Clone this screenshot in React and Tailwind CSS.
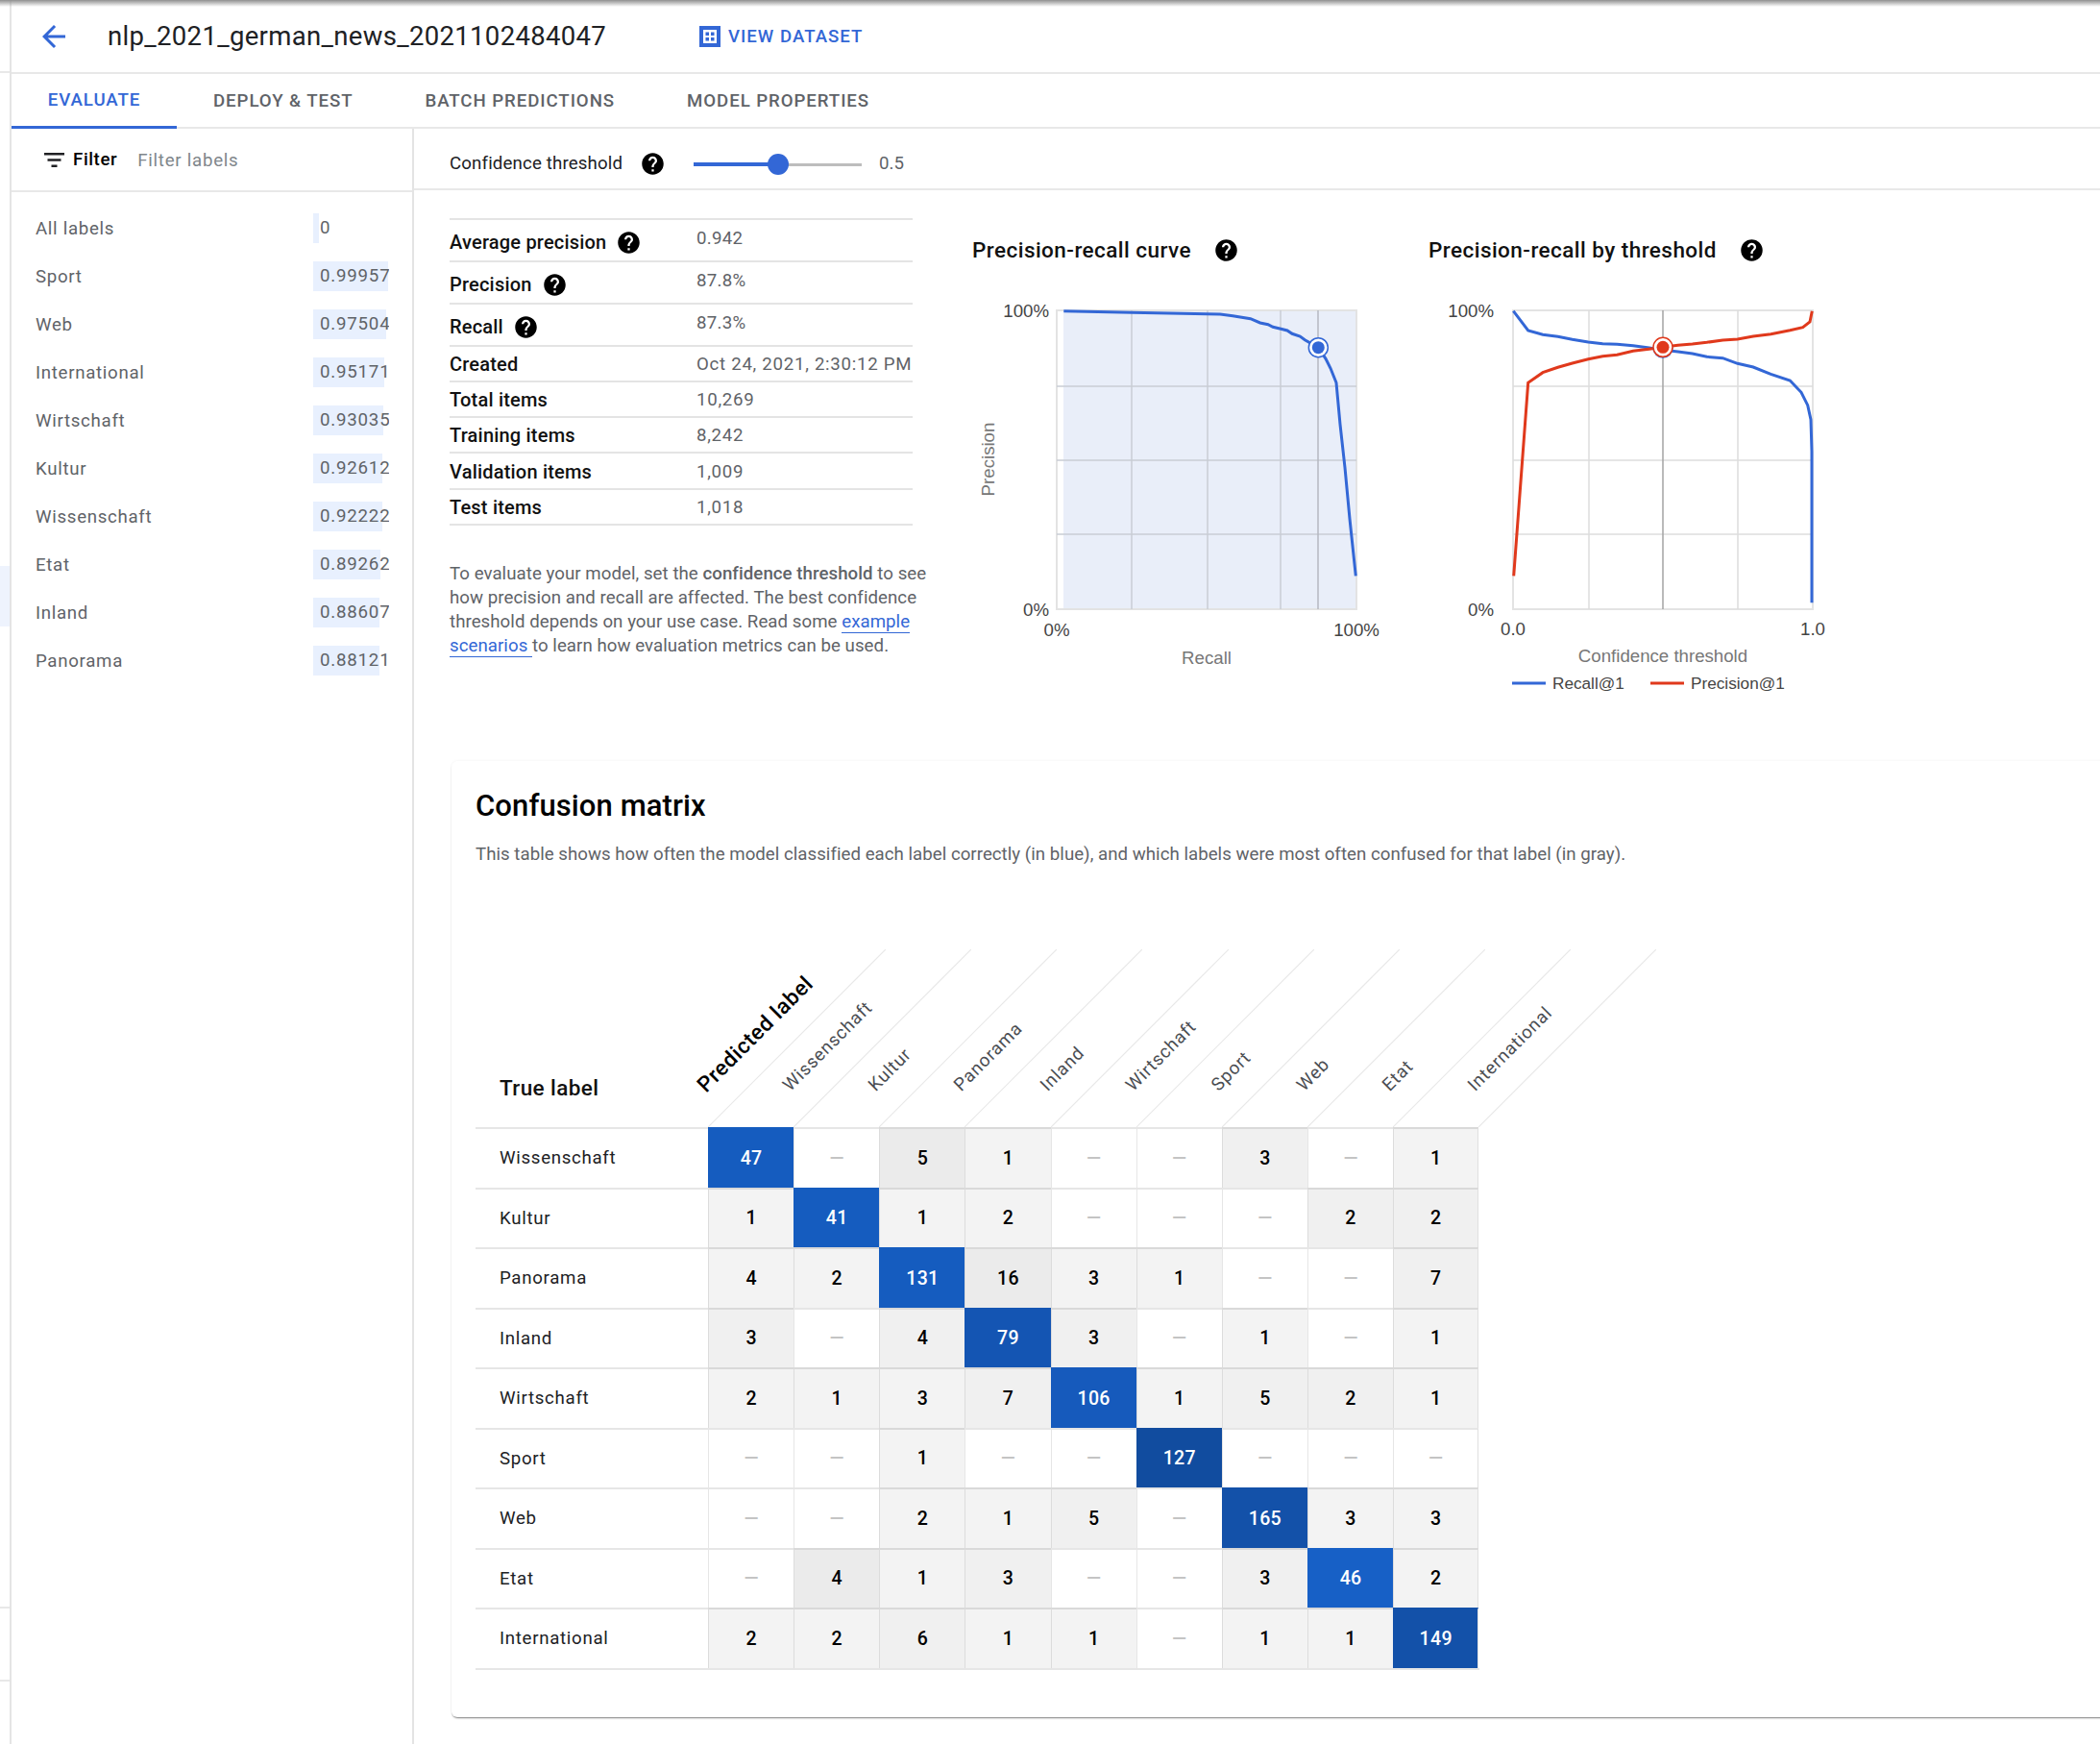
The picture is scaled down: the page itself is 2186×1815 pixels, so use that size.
import React from "react";

const HELP = "M12 2C6.48 2 2 6.48 2 12s4.48 10 10 10 10-4.48 10-10S17.52 2 12 2zm1 17h-2v-2h2v2zm2.07-7.75l-.9.92C13.45 12.9 13 13.5 13 15h-2v-.5c0-1.1.45-2.1 1.17-2.83l1.24-1.26c.37-.36.59-.86.59-1.41 0-1.1-.9-2-2-2s-2 .9-2 2H8c0-2.21 1.79-4 4-4s4 1.79 4 4c0 .88-.36 1.68-.93 2.25z";

function Help({ className = "" }) {
  return (
    <svg viewBox="0 0 24 24" className={"w-[27px] h-[27px] shrink-0 " + className}>
      <path d={HELP} fill="#000" />
    </svg>
  );
}

const labels = [
  ["All labels", "0", "w-[6px]"],
  ["Sport", "0.99957", "w-[78px]"],
  ["Web", "0.97504", "w-[76px]"],
  ["International", "0.95171", "w-[74px]"],
  ["Wirtschaft", "0.93035", "w-[73px]"],
  ["Kultur", "0.92612", "w-[72px]"],
  ["Wissenschaft", "0.92222", "w-[72px]"],
  ["Etat", "0.89262", "w-[70px]"],
  ["Inland", "0.88607", "w-[69px]"],
  ["Panorama", "0.88121", "w-[69px]"],
];

const metrics = [
  { k: "Average precision", v: "0.942", h: "h-[44px]", help: true },
  { k: "Precision", v: "87.8%", h: "h-[44px]", help: true },
  { k: "Recall", v: "87.3%", h: "h-[44px]", help: true },
  { k: "Created", v: "Oct 24, 2021, 2:30:12 PM", h: "h-[37px]" },
  { k: "Total items", v: "10,269", h: "h-[37px]" },
  { k: "Training items", v: "8,242", h: "h-[37px]" },
  { k: "Validation items", v: "1,009", h: "h-[38px]" },
  { k: "Test items", v: "1,018", h: "h-[37px]" },
];

const headers = ["Predicted label", "Wissenschaft", "Kultur", "Panorama", "Inland", "Wirtschaft", "Sport", "Web", "Etat", "International"];

const matrix = [
  ["Wissenschaft", "47:p", "-", "5:c", "1:a", "-", "-", "3:b", "-", "1:a"],
  ["Kultur", "1:a", "41:p", "1:a", "2:a", "-", "-", "-", "2:b", "2:b"],
  ["Panorama", "4:a", "2:a", "131:p", "16:c", "3:a", "1:a", "-", "-", "7:b"],
  ["Inland", "3:b", "-", "4:b", "79:q", "3:b", "-", "1:a", "-", "1:a"],
  ["Wirtschaft", "2:a", "1:a", "3:a", "7:b", "106:r", "1:a", "5:b", "2:b", "1:a"],
  ["Sport", "-", "-", "1:a", "-", "-", "127:s", "-", "-", "-"],
  ["Web", "-", "-", "2:a", "1:a", "5:b", "-", "165:t", "3:a", "3:a"],
  ["Etat", "-", "4:c", "1:a", "3:b", "-", "-", "3:b", "46:u", "2:a"],
  ["International", "2:a", "2:a", "6:b", "1:a", "1:a", "-", "1:a", "1:a", "149:t"],
];

const tier = {
  a: "bg-[#f3f3f3] border-t-[#d9d9d9] border-l-[#dcdcdc] text-black",
  b: "bg-[#f0f0f0] border-t-[#d9d9d9] border-l-[#dcdcdc] text-black",
  c: "bg-[#ebebeb] border-t-[#d9d9d9] border-l-[#dcdcdc] text-black",
  p: "bg-[#155cbf] border-t-[#155cbf] border-l-[#155cbf] text-white",
  q: "bg-[#1455b3] border-t-[#1455b3] border-l-[#1455b3] text-white",
  r: "bg-[#165abc] border-t-[#165abc] border-l-[#165abc] text-white",
  s: "bg-[#114c9f] border-t-[#114c9f] border-l-[#114c9f] text-white",
  t: "bg-[#1351a9] border-t-[#1351a9] border-l-[#1351a9] text-white",
  u: "bg-[#1760c6] border-t-[#1760c6] border-l-[#1760c6] text-white",
  z: "bg-white border-t-[#e6e6e6] border-l-[#e6e6e6] text-[#c4c4c4]",
};

function Cell({ value, last }) {
  const [v, t] = value === "-" ? ["—", "z"] : value.split(":");
  return (
    <div
      className={
        "w-[89.15px] shrink-0 border-t-2 border-l flex items-center justify-center font-medium text-[19.5px] tracking-[0.3px] " +
        tier[t] +
        (last ? " border-r border-r-[#e0e0e0]" : "")
      }
    >
      {v}
    </div>
  );
}

const prCurve = [[352,311],[565,316],[800,320],[840,321],[880,326],[935,335],[965,348],[990,353],[1005,361],[1030,367],[1050,372],[1065,382],[1090,390],[1105,401],[1147,425],[1170,460],[1185,490],[1203,535],[1215,665],[1230,800],[1245,960],[1264,1138]];
const recallCurve = [[376,311],[422,372],[468,385],[515,391],[560,400],[610,408],[655,413],[700,415],[750,419],[800,426],[843,433],[890,438],[935,444],[980,454],[1030,458],[1076,475],[1125,486],[1180,508],[1240,528],[1275,565],[1295,605],[1305,650],[1308,750],[1308,1222]];
const precCurve = [[377,1138],[422,535],[468,503],[515,487],[560,474],[610,461],[655,452],[700,448],[750,436],[800,430],[843,424],[890,418],[935,414],[980,409],[1030,402],[1076,399],[1125,390],[1180,383],[1240,371],[1280,362],[1302,345],[1309,311]];
const pts = (c, ox) => c.map(([x, y]) => `${(ox + x / 3).toFixed(1)},${(220 + y / 3).toFixed(1)}`).join(" ");

const AXIS = { fontFamily: "'Liberation Sans', Arial, sans-serif", fontSize: 18.67, fill: "#444" };
const AXT = { fontFamily: "'Liberation Sans', Arial, sans-serif", fontSize: 18.67, fill: "#777" };
const LEG = { fontFamily: "'Liberation Sans', Arial, sans-serif", fontSize: 17.2, fill: "#444" };

function Grid({ x0, x1, xs, dark }) {
  return (
    <g>
      <rect x={x0} y={323} width={x1 - x0} height={311} fill="none" stroke="#e3e3e3" strokeWidth="2" />
      {[402, 479, 556].map((y) => (
        <line key={y} x1={x0} x2={x1} y1={y} y2={y} stroke="#dcdcdc" strokeWidth="1.5" />
      ))}
      {xs.map((x) => (
        <line key={x} x1={x} x2={x} y1={323} y2={634} stroke="#dcdcdc" strokeWidth="1.5" />
      ))}
      <line x1={dark} x2={dark} y1={323} y2={634} stroke="#a3a3a3" strokeWidth="1.5" />
    </g>
  );
}

function PRChart() {
  return (
    <svg width="470" height="450" viewBox="1013 276 470 450" className="block">
      <rect x="1107" y="324" width="305" height="310" fill="#e9eef9" />
      <rect x="1100" y="323" width="312" height="311" fill="none" stroke="#e3e3e3" strokeWidth="2" />
      {[402, 479, 556].map((y) => (
        <line key={y} x1="1100" x2="1412" y1={y} y2={y} stroke="#c9ccd4" strokeWidth="1.5" />
      ))}
      {[1178, 1257, 1333].map((x) => (
        <line key={x} x1={x} x2={x} y1="323" y2="634" stroke="#c9ccd4" strokeWidth="1.5" />
      ))}
      <line x1="1372" x2="1372" y1="323" y2="634" stroke="#b4b7c0" strokeWidth="1.5" />
      <polyline points={pts(prCurve, 990)} fill="none" stroke="#3367d6" strokeWidth="3" />
      <circle cx="1372.3" cy="361.7" r="10" fill="#fff" stroke="#3367d6" strokeWidth="1.5" />
      <circle cx="1372.3" cy="361.7" r="6.5" fill="#3367d6" />
      <text x="1092" y="330" textAnchor="end" style={AXIS}>100%</text>
      <text x="1092" y="641" textAnchor="end" style={AXIS}>0%</text>
      <text x="1100" y="662" textAnchor="middle" style={AXIS}>0%</text>
      <text x="1412" y="662" textAnchor="middle" style={AXIS}>100%</text>
      <text x="1256" y="691" textAnchor="middle" style={AXT}>Recall</text>
      <text x="1035" y="478" textAnchor="middle" transform="rotate(-90 1035 478)" style={AXT}>Precision</text>
    </svg>
  );
}

function ThresholdChart() {
  return (
    <svg width="470" height="450" viewBox="1488 276 470 450" className="block">
      <Grid x0={1575} x1={1887} xs={[1654, 1809]} dark={1731} />
      <polyline points={pts(recallCurve, 1450)} fill="none" stroke="#3367d6" strokeWidth="3" />
      <polyline points={pts(precCurve, 1450)} fill="none" stroke="#e0391c" strokeWidth="3" />
      <circle cx="1731" cy="362.3" r="10.5" fill="#3367d6" />
      <circle cx="1731" cy="361.3" r="10" fill="#fff" stroke="#e0391c" strokeWidth="1.5" />
      <circle cx="1731" cy="361.3" r="6.5" fill="#e0391c" />
      <text x="1555" y="330" textAnchor="end" style={AXIS}>100%</text>
      <text x="1555" y="641" textAnchor="end" style={AXIS}>0%</text>
      <text x="1575" y="661" textAnchor="middle" style={AXIS}>0.0</text>
      <text x="1887" y="661" textAnchor="middle" style={AXIS}>1.0</text>
      <text x="1731" y="689" textAnchor="middle" style={AXT}>Confidence threshold</text>
      <line x1="1574" x2="1609" y1="711" y2="711" stroke="#3367d6" strokeWidth="3" />
      <text x="1616" y="717" style={LEG}>Recall@1</text>
      <line x1="1718" x2="1753" y1="711" y2="711" stroke="#e0391c" strokeWidth="3" />
      <text x="1760" y="717" style={LEG}>Precision@1</text>
    </svg>
  );
}

export default function App() {
  return (
    <div className="relative flex w-[2186px] h-[1815px] overflow-hidden bg-white font-['Roboto',sans-serif] text-[18.67px] text-[#5f6368]">
      <div className="absolute inset-x-0 top-0 h-[7px] bg-gradient-to-b from-[#909090] to-transparent" />

      {/* far-left rail */}
      <div className="w-[12px] shrink-0 border-r-2 border-[#e4e4e4] flex flex-col">
        <div className="h-[76px] shrink-0 border-b-2 border-[#e8e8e8]" />
        <div className="h-[513px] shrink-0" />
        <div className="h-[63px] shrink-0 bg-[#eef3fd]" />
        <div className="h-[1022px] shrink-0 border-b-2 border-[#e8e8e8]" />
        <div className="h-[76px] shrink-0 border-b-2 border-[#e8e8e8]" />
      </div>

      <div className="flex-1 min-w-0 flex flex-col">
        {/* title bar */}
        <div className="h-[77px] shrink-0 border-b-2 border-[#e8e8e8] flex items-center">
          <svg viewBox="0 0 24 24" className="w-[36px] h-[36px] ml-[26px]">
            <path d="M20 11H7.83l5.59-5.59L12 4l-8 8 8 8 1.41-1.41L7.83 13H20v-2z" fill="#3367d6" />
          </svg>
          <div className="ml-[38px] w-[616px] text-[27.5px] tracking-[0.33px] text-[#202124] leading-none">nlp_2021_german_news_2021102484047</div>
          <svg viewBox="0 0 22 22" className="w-[22px] h-[22px]">
            <path fillRule="evenodd" d="M0 0h22v22H0zM4 4v14h14V4z" fill="#3367d6" />
            <path d="M6.5 6.5h3.5v3.5H6.5zM12 6.5h3.5v3.5H12zM6.5 12h3.5v3.5H6.5zM12 12h3.5v3.5H12z" fill="#3367d6" />
          </svg>
          <div className="ml-[8px] mt-[1px] text-[18.67px] font-medium tracking-[1px] text-[#3367d6] leading-none">VIEW DATASET</div>
        </div>

        {/* tabs */}
        <div className="h-[57px] shrink-0 border-b-2 border-[#e8e8e8] flex font-medium text-[18.67px] tracking-[0.93px]">
          <div className="w-[172px] h-[57px] border-b-[3px] border-[#3367d6] text-[#3367d6] flex items-center justify-center">EVALUATE</div>
          <div className="ml-[38px] flex items-center">DEPLOY &amp; TEST</div>
          <div className="ml-[75px] flex items-center">BATCH PREDICTIONS</div>
          <div className="ml-[75px] flex items-center">MODEL PROPERTIES</div>
        </div>

        <div className="flex-1 min-h-0 flex">
          {/* sidebar */}
          <div className="w-[419px] shrink-0 border-r-2 border-[#e4e4e4]">
            <div className="h-[66px] border-b-2 border-[#e8e8e8] flex items-center">
              <svg viewBox="0 0 21 15" className="w-[21px] h-[15px] ml-[34px]">
                <path d="M0 0h21v2.6H0zM3.5 6.2h14v2.6h-14zM7.5 12.4h6V15h-6z" fill="#202124" />
              </svg>
              <span className="ml-[9px] font-medium text-black tracking-[0.6px]">Filter</span>
              <span className="ml-[21px] mt-[1px] text-[#80868b] tracking-[0.75px]">Filter labels</span>
            </div>
            <div className="pt-[22px] pl-[25px]">
              {labels.map(([name, val, w]) => (
                <div key={name} className="relative flex items-center h-[31px] mb-[19px]">
                  <div className="w-[289px] shrink-0 tracking-[0.7px]">{name}</div>
                  <div className="relative w-[79px] h-[31px] overflow-hidden">
                    <div className={"absolute inset-y-0 left-0 bg-[#e8f0fe] " + w} />
                    <div className="absolute left-[7px] top-0 h-[31px] leading-[31px] tracking-[0.8px]">{val}</div>
                  </div>
                </div>
              ))}
            </div>
          </div>

          {/* main */}
          <div className="flex-1 min-w-0 flex flex-col">
            <div className="h-[64px] shrink-0 border-b-2 border-[#e8e8e8] flex items-center pl-[37px] pt-[10px]">
              <span className="text-[#202124] w-[198px] tracking-[0.15px]">Confidence threshold</span>
              <Help />
              <div className="relative ml-[29px] mt-[2px] w-[175px] h-[22px] flex items-center">
                <div className="h-[3px] w-full bg-[#bdbdbd]" />
                <div className="absolute left-0 top-[9px] h-[4px] w-[88px] bg-[#3367d6]" />
                <div className="absolute left-[77px] top-0 w-[22px] h-[22px] rounded-full bg-[#3367d6]" />
              </div>
              <span className="ml-[18px]">0.5</span>
            </div>

            <div className="pl-[37px] pt-[29px] flex h-[594px] shrink-0">
              <div className="w-[498px] shrink-0">
                <div className="w-[482px] border-t-2 border-[#e4e4e4]">
                  {metrics.map((m) => (
                    <div key={m.k} className={"flex border-b-2 border-[#e4e4e4] " + m.h + (m.help ? " items-start" : " items-center")}>
                      <div className={"w-[257px] shrink-0 flex items-center font-medium text-[20px] tracking-[0.2px] text-[#111] " + (m.help ? "h-[46px]" : "pt-[1px]")}>
                        {m.k}
                        {m.help && <Help className="ml-[10px]" />}
                      </div>
                      <div className={"leading-none " + (m.help ? "pt-[10px] tracking-[0.3px]" : "pt-[2px] tracking-[0.72px]")}>{m.v}</div>
                    </div>
                  ))}
                </div>
                <p className="mt-[38px] w-[500px] leading-[25px] tracking-[0.05px]">
                  To evaluate your model, set the <b className="font-medium">confidence threshold</b> to see how precision and recall are affected. The best confidence threshold depends on your use case. Read some{" "}
                  <span className="text-[#3367d6] border-b border-[#3367d6]">example scenarios </span>
                  to learn how evaluation metrics can be used.
                </p>
              </div>
              <div className="w-[475px] shrink-0 ml-[46px] pt-[18px]">
                <div className="h-[31px] flex items-center text-[22.5px] tracking-[0.45px] font-medium text-[#111]">
                  Precision-recall curve
                  <Help className="ml-[23px]" />
                </div>
                <div className="ml-[1px]">
                  <PRChart />
                </div>
              </div>
              <div className="w-[475px] shrink-0 pt-[18px]">
                <div className="h-[31px] flex items-center text-[22.5px] tracking-[0.45px] font-medium text-[#111]">
                  Precision-recall by threshold
                  <Help className="ml-[23px]" />
                </div>
                <div className="ml-[1px]">
                  <ThresholdChart />
                </div>
              </div>
            </div>

            {/* card */}
            <div className="ml-[39px] w-[1800px] h-[995px] shrink-0 rounded-[6px] bg-white pl-[25px] pt-[27px] shadow-[0_2px_2px_-1px_rgba(0,0,0,0.5),0_0_3px_rgba(0,0,0,0.06)]">
              <h2 className="h-[40px] leading-[40px] text-[31px] tracking-[0.1px] font-medium text-black">Confusion matrix</h2>
              <p className="mt-[18px] h-[25px] leading-[25px] tracking-[0.03px]">This table shows how often the model classified each label correctly (in blue), and which labels were most often confused for that label (in gray).</p>

              <div className="mt-[86px] w-[1250px]">
                {/* header */}
                <div className="relative flex h-[185px] items-end">
                  <div className="w-[242px] shrink-0 pl-[25px] pb-[27px] text-[22.5px] tracking-[0.4px] font-medium text-[#111] leading-[28px]">True label</div>
                  {headers.map((h, i) => (
                    <div key={h} className="relative w-[89.15px] h-[185px] shrink-0">
                      <svg viewBox="0 0 185 185" className="absolute left-0 top-0 w-[185px] h-[185px]">
                        <line x1="0" y1="185" x2="185" y2="0" stroke="#e8e8e8" strokeWidth="1.2" />
                      </svg>
                      <div
                        className={
                          "absolute left-[0px] bottom-[33px] origin-bottom-left -rotate-45 whitespace-nowrap leading-[22px] " +
                          (i === 0 ? "text-[22.5px] tracking-[0.6px] font-medium text-black" : "text-[18.67px] tracking-[0.8px] text-[#4a4d52]")
                        }
                      >
                        {h}
                      </div>
                    </div>
                  ))}
                </div>
                {/* rows */}
                {matrix.map((row) => (
                  <div key={row[0]} className="flex h-[62.5px]">
                    <div className="w-[242px] shrink-0 pl-[25px] border-t-2 border-[#e6e6e6] flex items-center tracking-[0.7px] text-[#202124]">{row[0]}</div>
                    {row.slice(1).map((c, i) => (
                      <Cell key={i} value={c} last={i === 8} />
                    ))}
                  </div>
                ))}
                <div className="w-[1045px] h-[2px] bg-[#e6e6e6]" />
              </div>
            </div>
          </div>
        </div>
      </div>
    </div>
  );
}
